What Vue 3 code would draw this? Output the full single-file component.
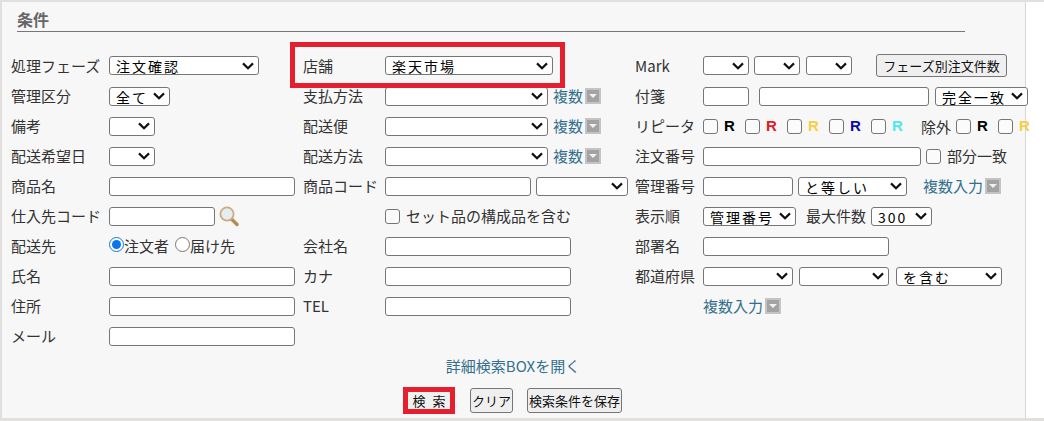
<script setup>
const repeaters = [
  { color: '#000' },
  { color: '#e01b24' },
  { color: '#f5cf45' },
  { color: '#0a0aa8' },
  { color: '#4de8ec' }
]
</script>

<template>
  <div class="page">
    <section class="panel">
      <h2 class="title">条件</h2>
      <div class="grid">
        <!-- row 1 -->
        <label class="lbl">処理フェーズ</label>
        <div class="cell"><select class="s150"><option>注文確認</option></select></div>
        <label class="lbl">店舗</label>
        <div class="cell"><select class="s168"><option>楽天市場</option></select></div>
        <label class="lbl">Mark</label>
        <div class="cell">
          <select class="s46"></select><select class="s46 ml5"></select><select class="s46 ml6"></select>
          <button class="phase">フェーズ別注文件数</button>
        </div>
        <!-- row 2 -->
        <label class="lbl">管理区分</label>
        <div class="cell"><select class="s61"><option>全て</option></select></div>
        <label class="lbl">支払方法</label>
        <div class="cell"><select class="s163"></select><a class="link ml5">複数</a><i class="more"></i></div>
        <label class="lbl">付箋</label>
        <div class="cell">
          <input class="w46" /><input class="w170 ml10" />
          <select class="s93 ml6"><option>完全一致</option></select>
        </div>
        <!-- row 3 -->
        <label class="lbl">備考</label>
        <div class="cell"><select class="s46"></select></div>
        <label class="lbl">配送便</label>
        <div class="cell"><select class="s163"></select><a class="link ml5">複数</a><i class="more"></i></div>
        <label class="lbl">リピータ</label>
        <div class="cell rep">
          <span v-for="r in repeaters" :key="r.color" class="rep-item">
            <input type="checkbox" class="cb" /><b :style="{ color: r.color }">R</b>
          </span>
          <span class="except">除外</span>
          <span class="rep-item"><input type="checkbox" class="cb" /><b class="r-black">R</b></span>
          <span class="rep-item"><input type="checkbox" class="cb" /><b class="r-yellow">R</b></span>
        </div>
        <!-- row 4 -->
        <label class="lbl">配送希望日</label>
        <div class="cell"><select class="s46"></select></div>
        <label class="lbl">配送方法</label>
        <div class="cell"><select class="s163"></select><a class="link ml5">複数</a><i class="more"></i></div>
        <label class="lbl">注文番号</label>
        <div class="cell">
          <input class="w218" /><input type="checkbox" class="cb ml5" /><span class="txt ml6">部分一致</span>
        </div>
        <!-- row 5 -->
        <label class="lbl">商品名</label>
        <div class="cell"><input class="w186" /></div>
        <label class="lbl">商品コード</label>
        <div class="cell"><input class="w146" /><select class="s92 ml5"></select></div>
        <label class="lbl">管理番号</label>
        <div class="cell">
          <input class="w90" /><select class="s109 ml5"><option>と等しい</option></select>
          <a class="link ml16">複数入力</a><i class="more"></i>
        </div>
        <!-- row 6 -->
        <label class="lbl">仕入先コード</label>
        <div class="cell">
          <input class="w106" />
          <svg class="glass" viewBox="0 0 22 22" width="22" height="22" aria-hidden="true">
            <path d="M13.5 14 L19 19.5" stroke="#b98a52" stroke-width="3.4" stroke-linecap="round" />
            <circle cx="9" cy="9" r="6.6" fill="#e4edf2" stroke="#d0ab7c" stroke-width="1.8" />
          </svg>
        </div>
        <span></span>
        <div class="cell"><input type="checkbox" class="cb" /><span class="txt ml6">セット品の構成品を含む</span></div>
        <label class="lbl">表示順</label>
        <div class="cell">
          <select class="s93"><option>管理番号</option></select>
          <span class="txt ml10">最大件数</span>
          <select class="s61 ml5"><option>300</option></select>
        </div>
        <!-- row 7 -->
        <label class="lbl">配送先</label>
        <div class="cell radios">
          <input type="radio" name="dest" class="rd" checked /><span class="txt">注文者</span>
          <input type="radio" name="dest" class="rd ml6" /><span class="txt">届け先</span>
        </div>
        <label class="lbl">会社名</label>
        <div class="cell"><input class="w186" /></div>
        <label class="lbl">部署名</label>
        <div class="cell"><input class="w186" /></div>
        <!-- row 8 -->
        <label class="lbl">氏名</label>
        <div class="cell"><input class="w186" /></div>
        <label class="lbl">カナ</label>
        <div class="cell"><input class="w186" /></div>
        <label class="lbl">都道府県</label>
        <div class="cell">
          <select class="s90"></select><select class="s90 ml6"></select>
          <select class="s106 ml7"><option>を含む</option></select>
        </div>
        <!-- row 9 -->
        <label class="lbl">住所</label>
        <div class="cell"><input class="w186" /></div>
        <label class="lbl">TEL</label>
        <div class="cell"><input class="w186" /></div>
        <span></span>
        <div class="cell"><a class="link">複数入力</a><i class="more"></i></div>
        <!-- row 10 -->
        <label class="lbl">メール</label>
        <div class="cell"><input class="w186" /></div>
      </div>

      <div class="detail"><a class="link">詳細検索BOXを開く</a></div>

      <div class="actions">
        <button class="btn search">検 索</button>
        <button class="btn clear">クリア</button>
        <button class="btn save">検索条件を保存</button>
      </div>

      <div class="mark mark-shop"></div>
      <div class="mark mark-search"></div>
    </section>
  </div>
</template>

<style>
html, body { margin: 0; background: #fff; }
</style>

<style scoped>
.page {
  width: 1044px;
  height: 421px;
  overflow: hidden;
  background: #e2dfdf;
  box-sizing: border-box;
  padding: 2px 0 3px 2px;
  display: flex;
  font-family: "Noto Sans CJK JP", "Noto Sans", sans-serif;
  color: #333;
}
.page::after {
  content: "";
  width: 18px;
  flex: none;
  background: #fff;
}
.panel {
  position: relative;
  flex: 1;
  min-width: 0;
  background: #f7f7f7;
  border-right: 1px solid #d6d6d6;
  box-sizing: border-box;
  padding: 0 0 0 9px;
}
.title {
  margin: 0 0 0 6px;
  width: 948px;
  height: 30px;
  box-sizing: border-box;
  padding-top: 6px;
  border-bottom: 1px solid #777;
  font-size: 16px;
  line-height: 22px;
  font-weight: 700;
  color: #666;
}
.grid {
  margin-top: 19px;
  display: grid;
  grid-template-columns: 98px 194px 82px 250px 68px 330px;
  grid-auto-rows: 30px;
  align-items: center;
  width: 1022px;
}
.grid > :nth-child(-n+6) { margin-bottom: 1px; }
.lbl {
  font-size: 15px;
  line-height: 20px;
  white-space: nowrap;
  color: #333;
}
.cell {
  display: flex;
  align-items: center;
  white-space: nowrap;
  height: 30px;
}
select, input:not([type]), .phase, .btn {
  font-family: "Noto Sans CJK JP", sans-serif;
  box-sizing: border-box;
}
select {
  appearance: none;
  height: 19px;
  font-size: 14px;
  line-height: 16px;
  letter-spacing: 2px;
  background: #fff url("data:image/svg+xml,%3Csvg xmlns='http://www.w3.org/2000/svg' width='12' height='8'%3E%3Cpath d='M1 1.4 6 6.2 11 1.4' fill='none' stroke='%23111' stroke-width='2.2'/%3E%3C/svg%3E") no-repeat right 4px center;
  border: 1px solid #767676;
  border-radius: 3px;
  padding: 1px 0 0 6px;
  color: #000;
  flex: none;
}
input:not([type]) {
  height: 19px;
  background: #fff;
  border: 1px solid #767676;
  border-radius: 3px;
  padding: 0;
  flex: none;
}
.cb {
  appearance: none;
  width: 15px;
  height: 15px;
  margin: 0;
  flex: none;
  box-sizing: border-box;
  background: #fbfbfb;
  border: 1px solid #767676;
  border-radius: 3px;
}
.rd { width: 15px; height: 15px; margin: 0 0 3px; flex: none; accent-color: #0a74e8; }
.s46 { width: 46px; } .s61 { width: 61px; } .s90 { width: 90px; }
.s92 { width: 92px; } .s93 { width: 93px; } .s106 { width: 106px; }
.s109 { width: 109px; } .s150 { width: 150px; } .s163 { width: 163px; } .s168 { width: 168px; }
.w46 { width: 46px; } .w90 { width: 90px; } .w106 { width: 106px; }
.w146 { width: 146px; } .w170 { width: 170px; } .w186 { width: 186px; } .w218 { width: 218px; }
.ml5 { margin-left: 5px; } .ml6 { margin-left: 6px; }
.ml7 { margin-left: 7px; } .ml10 { margin-left: 10px; } .ml16 { margin-left: 16px; }
.link {
  font-size: 15px;
  line-height: 20px;
  color: #336f8c;
  cursor: pointer;
}
.txt { font-size: 15px; line-height: 20px; color: #333; }
.more {
  display: inline-block;
  position: relative;
  width: 16px;
  height: 16px;
  margin-left: 2px;
  box-sizing: border-box;
  background: #a3a3a3;
  border: 2px solid #c4c4c4;
  flex: none;
}
.more::after {
  content: "";
  position: absolute;
  left: 2px;
  top: 4px;
  border-left: 4px solid transparent;
  border-right: 4px solid transparent;
  border-top: 4px solid #f2f2f2;
}
.phase {
  margin-left: 24px;
  width: 131px;
  height: 23px;
  padding: 0;
  font-size: 13px;
  background: #efefef;
  border: 1px solid #767676;
  border-radius: 3px;
  color: #111;
}
.rep-item { display: inline-flex; align-items: center; width: 42px; flex: none; }
.rep-item b {
  margin-left: 6px;
  font-family: "Liberation Sans", sans-serif;
  font-size: 15px;
  font-weight: 700;
  line-height: 20px;
}
.r-black { color: #000; }
.r-yellow { color: #f5cf45; }
.except { font-size: 15px; margin-left: 8px; width: 35px; color: #333; flex: none; }
.glass { margin-left: 3px; flex: none; }
.detail {
  margin-top: 4px;
  text-align: center;
  width: 1004px;
  height: 20px;
  line-height: 20px;
}
.actions {
  display: flex;
  align-items: flex-start;
  margin-left: 397px;
  margin-top: 13px;
}
.btn {
  font-size: 13px;
  background: #efefef;
  border: 1px solid #767676;
  border-radius: 3px;
  padding: 0;
  height: 25px;
  color: #111;
  white-space: nowrap;
  flex: none;
}
.search {
  width: 42px;
  height: 23px;
  margin-top: 1px;
  border: none;
  background: #f0f0f0;
  word-spacing: 4px;
}
.clear { margin-left: 20px; width: 43px; }
.save { margin-left: 14px; width: 95px; }
.mark {
  position: absolute;
  border: 5px solid #e5202e;
  box-sizing: border-box;
  pointer-events: none;
}
.mark-shop { left: 288px; top: 40px; width: 275px; height: 46px; }
.mark-search { left: 401px; top: 385px; width: 52px; height: 27px; }
</style>
